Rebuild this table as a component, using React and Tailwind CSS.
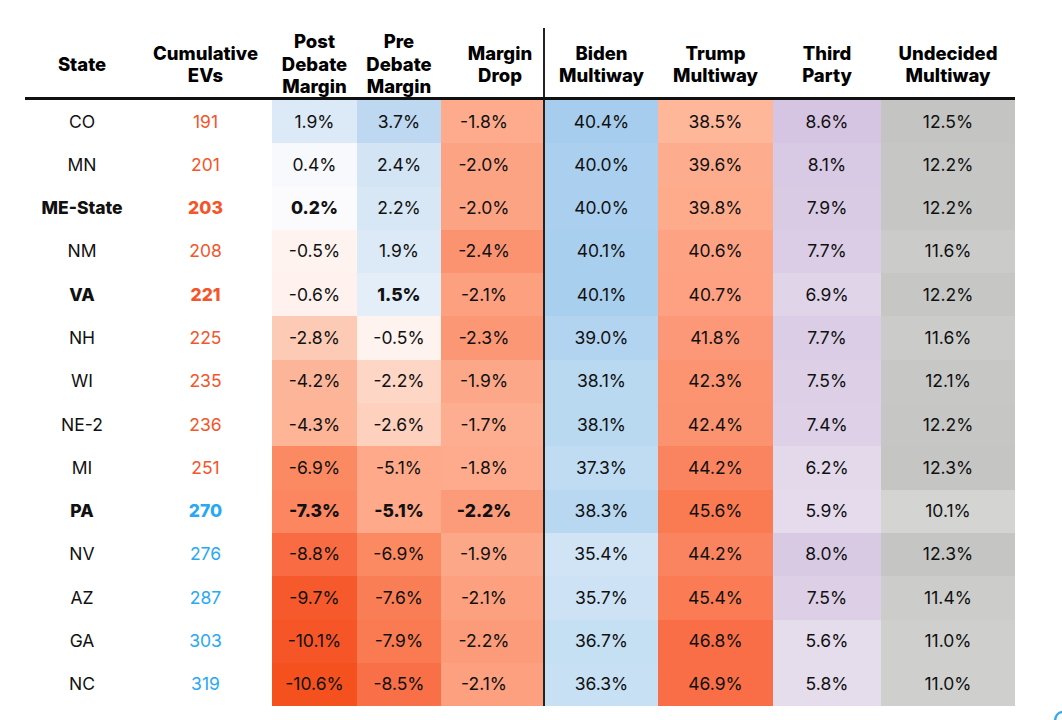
const cols = [
  { key: 'state', label: ['State'], w: 'w-[114px]' },
  { key: 'ev', label: ['Cumulative', 'EVs'], w: 'w-[133px]' },
  { key: 'post', label: ['Post', 'Debate', 'Margin'], w: 'w-[85px]' },
  { key: 'pre', label: ['Pre', 'Debate', 'Margin'], w: 'w-[84px]' },
  { key: 'drop', label: ['Margin', 'Drop'], w: 'w-[102px]' },
  { key: 'biden', label: ['Biden', 'Multiway'], w: 'w-[115px]' },
  { key: 'trump', label: ['Trump', 'Multiway'], w: 'w-[115px]' },
  { key: 'third', label: ['Third', 'Party'], w: 'w-[108px]' },
  { key: 'und', label: ['Undecided', 'Multiway'], w: 'w-[134px]' },
]

// each cell: [value, bg]
const rows = [
  { state: 'CO', ev: '191',
    post: ['1.9%', '#dce9f6'], pre: ['3.7%', '#bdd8f0'], drop: ['-1.8%', '#fdab8c'],
    biden: ['40.4%', '#a7cdee'], trump: ['38.5%', '#feb799'], third: ['8.6%', '#d6c5e2'], und: ['12.5%', '#c4c4c3'] },
  { state: 'MN', ev: '201',
    post: ['0.4%', '#f7f9fd'], pre: ['2.4%', '#d3e5f5'], drop: ['-2.0%', '#fca384'],
    biden: ['40.0%', '#aacfef'], trump: ['39.6%', '#fdac8e'], third: ['8.1%', '#d8c9e4'], und: ['12.2%', '#c6c6c5'] },
  { state: 'ME-State', ev: '203', bold: true, postBold: true,
    post: ['0.2%', '#fbfbfe'], pre: ['2.2%', '#d7e7f5'], drop: ['-2.0%', '#fca384'],
    biden: ['40.0%', '#aacfef'], trump: ['39.8%', '#fdab8b'], third: ['7.9%', '#dacbe5'], und: ['12.2%', '#c6c6c5'] },
  { state: 'NM', ev: '208',
    post: ['-0.5%', '#fff3f0'], pre: ['1.9%', '#dce9f6'], drop: ['-2.4%', '#fb9371'],
    biden: ['40.1%', '#a9cfef'], trump: ['40.6%', '#fda283'], third: ['7.7%', '#dbcde6'], und: ['11.6%', '#cbcbca'] },
  { state: 'VA', ev: '221', bold: true, preBold: true,
    post: ['-0.6%', '#fff1ed'], pre: ['1.5%', '#e3eef8'], drop: ['-2.1%', '#fca080'],
    biden: ['40.1%', '#a9cfef'], trump: ['40.7%', '#fda182'], third: ['6.9%', '#e0d4e9'], und: ['12.2%', '#c6c6c5'] },
  { state: 'NH', ev: '225',
    post: ['-2.8%', '#fdcab5'], pre: ['-0.5%', '#fff3f0'], drop: ['-2.3%', '#fb9775'],
    biden: ['39.0%', '#b2d4f0'], trump: ['41.8%', '#fc9877'], third: ['7.7%', '#dbcde6'], und: ['11.6%', '#cbcbca'] },
  { state: 'WI', ev: '235',
    post: ['-4.2%', '#fdb599'], pre: ['-2.2%', '#fed6c6'], drop: ['-1.9%', '#fca788'],
    biden: ['38.1%', '#b9d9f1'], trump: ['42.3%', '#fc9471'], third: ['7.5%', '#dccfe6'], und: ['12.1%', '#c7c7c6'] },
  { state: 'NE-2', ev: '236',
    post: ['-4.3%', '#fdb497'], pre: ['-2.6%', '#fed0be'], drop: ['-1.7%', '#fdae90'],
    biden: ['38.1%', '#b9d9f1'], trump: ['42.4%', '#fc9370'], third: ['7.4%', '#ddd0e7'], und: ['12.2%', '#c6c6c5'] },
  { state: 'MI', ev: '251',
    post: ['-6.9%', '#fb8a62'], pre: ['-5.1%', '#fda98a'], drop: ['-1.8%', '#fdab8c'],
    biden: ['37.3%', '#c0dcf2'], trump: ['44.2%', '#fb8460'], third: ['6.2%', '#e3d9eb'], und: ['12.3%', '#c5c5c4'] },
  { state: 'PA', ev: '270', evBlue: true, bold: true, postBold: true, preBold: true, dropBold: true,
    post: ['-7.3%', '#fb8660'], pre: ['-5.1%', '#fda98a'], drop: ['-2.2%', '#fb9b7a'],
    biden: ['38.3%', '#b8d8f1'], trump: ['45.6%', '#fa7a52'], third: ['5.9%', '#e5dbec'], und: ['10.1%', '#d4d4d3'] },
  { state: 'NV', ev: '276', evBlue: true,
    post: ['-8.8%', '#f96c43'], pre: ['-6.9%', '#fb8a62'], drop: ['-1.9%', '#fca788'],
    biden: ['35.4%', '#d0e4f5'], trump: ['44.2%', '#fb8460'], third: ['8.0%', '#d9cae4'], und: ['12.3%', '#c5c5c4'] },
  { state: 'AZ', ev: '287', evBlue: true,
    post: ['-9.7%', '#f65a2c'], pre: ['-7.6%', '#fa7e55'], drop: ['-2.1%', '#fca080'],
    biden: ['35.7%', '#cde2f4'], trump: ['45.4%', '#fa7b54'], third: ['7.5%', '#dccfe6'], und: ['11.4%', '#cccccb'] },
  { state: 'GA', ev: '303', evBlue: true,
    post: ['-10.1%', '#f55527'], pre: ['-7.9%', '#fa7b52'], drop: ['-2.2%', '#fb9b7a'],
    biden: ['36.7%', '#c5dff3'], trump: ['46.8%', '#f96e47'], third: ['5.6%', '#e6ddec'], und: ['11.0%', '#cfcfce'] },
  { state: 'NC', ev: '319', evBlue: true,
    post: ['-10.6%', '#f4511e'], pre: ['-8.5%', '#f96f47'], drop: ['-2.1%', '#fca080'],
    biden: ['36.3%', '#c8e0f4'], trump: ['46.9%', '#f96e46'], third: ['5.8%', '#e5dcec'], und: ['11.0%', '#cfcfce'] },
]

function Cell({ w, bg, bold, extra = '', children }) {
  return (
    <div
      className={`${w} flex h-full items-center justify-center ${bold ? 'font-extrabold' : 'font-normal'} ${extra}`}
      style={bg ? { backgroundColor: bg } : undefined}
    >
      {children}
    </div>
  )
}

export default function App() {
  return (
    <div className="relative h-[720px] w-[1062px] overflow-hidden bg-white pl-[25px] pt-[28px] font-['Inter','Noto_Sans',sans-serif] text-[#111]">
      {/* header */}
      <div className="flex h-[72px] w-[990px] border-b-[3px] border-[#111]">
        {cols.map((c) => (
          <div
            key={c.key}
            className={`${c.w} flex flex-col items-center justify-center pt-[3px] text-[18.5px] font-extrabold leading-[22.5px] text-black ${c.key === 'biden' ? 'border-l-2 border-[#222]' : ''} ${c.key === 'drop' ? 'pl-4' : ''}`}
          >
            {c.label.map((l) => (
              <span key={l}>{l}</span>
            ))}
          </div>
        ))}
      </div>

      {/* body */}
      <div className="flex w-[990px] flex-col text-[17.5px]">
        {rows.map((r) => (
          <div key={r.state} className="flex h-[43.3px]">
            <Cell w="w-[114px]" bold={r.bold}>{r.state}</Cell>
            <Cell w="w-[133px]" bold={r.bold} extra={r.evBlue ? 'text-[#29a8f4]' : 'text-[#f4552a]'}>{r.ev}</Cell>
            <Cell w="w-[85px]" bg={r.post[1]} bold={r.postBold}>{r.post[0]}</Cell>
            <Cell w="w-[84px]" bg={r.pre[1]} bold={r.preBold}>{r.pre[0]}</Cell>
            <Cell w="w-[102px]" bg={r.drop[1]} bold={r.dropBold} extra="pr-4">{r.drop[0]}</Cell>
            <Cell w="w-[115px]" bg={r.biden[1]} extra="border-l-2 border-[#222]">{r.biden[0]}</Cell>
            <Cell w="w-[115px]" bg={r.trump[1]}>{r.trump[0]}</Cell>
            <Cell w="w-[108px]" bg={r.third[1]}>{r.third[0]}</Cell>
            <Cell w="w-[134px]" bg={r.und[1]}>{r.und[0]}</Cell>
          </div>
        ))}
      </div>

      {/* cut-off logo corner */}
      <svg className="absolute left-[1052px] top-[709px]" width="14" height="14" viewBox="0 0 14 14" fill="none">
        <path d="M3 13 C3 7 6 3 11 3" stroke="#35a9ee" strokeWidth="2.4" strokeLinecap="round" />
      </svg>
    </div>
  )
}
